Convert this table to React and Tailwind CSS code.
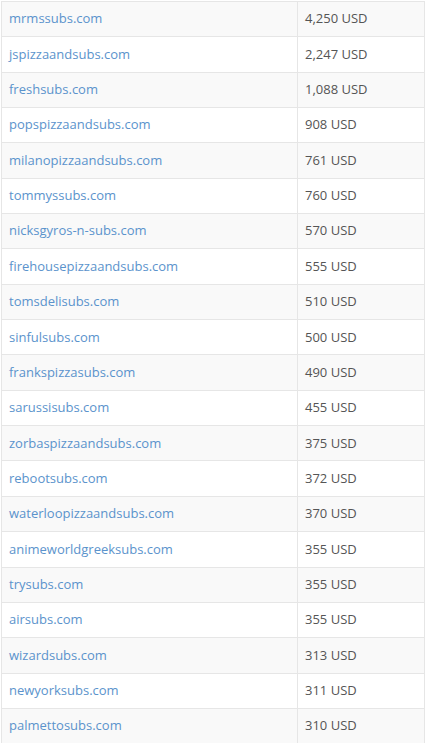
import React from "react";

const rows = [
  ["mrmssubs.com", "4,250 USD"],
  ["jspizzaandsubs.com", "2,247 USD"],
  ["freshsubs.com", "1,088 USD"],
  ["popspizzaandsubs.com", "908 USD"],
  ["milanopizzaandsubs.com", "761 USD"],
  ["tommyssubs.com", "760 USD"],
  ["nicksgyros-n-subs.com", "570 USD"],
  ["firehousepizzaandsubs.com", "555 USD"],
  ["tomsdelisubs.com", "510 USD"],
  ["sinfulsubs.com", "500 USD"],
  ["frankspizzasubs.com", "490 USD"],
  ["sarussisubs.com", "455 USD"],
  ["zorbaspizzaandsubs.com", "375 USD"],
  ["rebootsubs.com", "372 USD"],
  ["waterloopizzaandsubs.com", "370 USD"],
  ["animeworldgreeksubs.com", "355 USD"],
  ["trysubs.com", "355 USD"],
  ["airsubs.com", "355 USD"],
  ["wizardsubs.com", "313 USD"],
  ["newyorksubs.com", "311 USD"],
  ["palmettosubs.com", "310 USD"],
];

export default function App() {
  return (
    <div className="w-[429px] h-[743px] overflow-hidden bg-white" style={{ fontFamily: '"Open Sans", sans-serif' }}>
      <div className="mt-px ml-px w-[424px] border-t border-l border-r border-[#e6e6e6]">
        {rows.map(([d, v], i) => (
          <div
            key={d}
            className={`flex h-[35.35px] border-b border-[#e6e6e6] text-[13px] ${i % 2 === 0 ? "bg-[#f9f9f9]" : "bg-white"}`}
          >
            <div className="w-[296px] flex items-center pl-[7px] border-r border-[#e6e6e6] text-[#5b93cc]">{d}</div>
            <div className="flex-1 flex items-center pl-[7px] text-[#555555]">{v}</div>
          </div>
        ))}
      </div>
    </div>
  );
}
